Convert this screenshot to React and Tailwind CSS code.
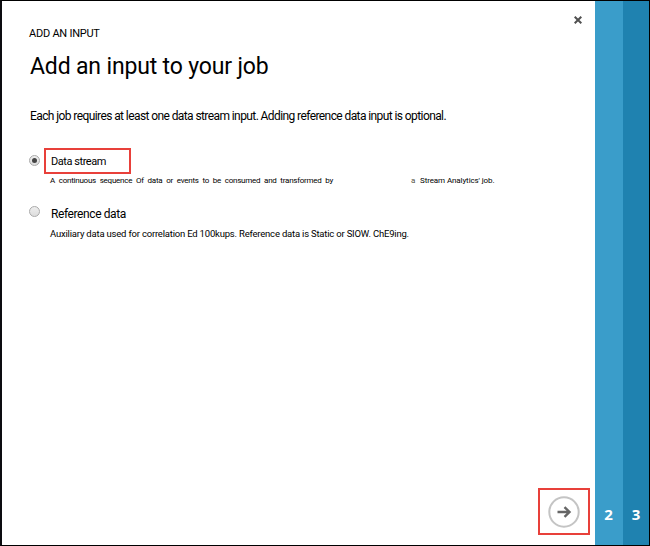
function Radio({ checked }) {
  return (
    <span className="mb-px flex h-[11px] w-[11px] shrink-0 items-center justify-center rounded-full border border-[#aaa] bg-linear-to-b from-[#eee] to-[#ddd]">
      {checked && <span className="h-[5px] w-[5px] rounded-full bg-[#444]" />}
    </span>
  );
}

export default function App() {
  return (
    <div className="flex h-[546px] w-[650px] overflow-hidden border border-l-2 border-black border-l-[#0c0c10] bg-white font-['Roboto','Liberation_Sans',sans-serif] text-black whitespace-nowrap">
      <main className="flex w-[593px] shrink-0 flex-col">
        <header className="flex h-[92px] justify-between pr-[13px] pl-[27px]">
          <div>
            <p className="mt-[25px] h-4 text-[11px] leading-4 tracking-[-0.24px]">ADD AN INPUT</p>
            <h1 className="mt-[9px] h-8 pl-px text-[23px] leading-8 tracking-[-0.16px]">Add an input to your job</h1>
          </div>
          <svg className="mt-[15px] h-2 w-2" viewBox="0 0 8 8" stroke="#505050" strokeWidth="2">
            <path d="M.7.7 7.3 7.3M7.3.7.7 7.3" />
          </svg>
        </header>
        <p className="mt-[15px] h-4 pl-[28px] text-[12px] leading-4 tracking-[-0.59px]">
          Each job requires at least one data stream input. Adding reference data input is optional.
        </p>
        <label className="mt-[24px] flex h-[26px] items-center pl-[27px]">
          <Radio checked />
          <span className="ml-[4px] flex h-[26px] w-[87px] items-center border-[2.5px] border-[#e8403a] pt-[2px] pl-[5px] text-[11px] tracking-[-0.45px]">
            Data stream
          </span>
        </label>
        <p className="mt-px flex h-3 pl-[48px] text-[8px] leading-3">
          <span className="w-[361px] tracking-[-0.24px] [word-spacing:2px]">
            A continuous sequence Of data or events to be consumed and transformed by
          </span>
          <span className="w-[9px] text-[#554]">a</span>
          <span className="tracking-[-0.1px]">Stream Analytics' job.</span>
        </p>
        <label className="mt-[17px] flex h-4 items-center pl-[27px]">
          <Radio />
          <span className="ml-[11px] pt-[3px] text-[12px] leading-4 tracking-[-0.4px]">Reference data</span>
        </label>
        <p className="mt-[8px] h-3 pl-[48px] text-[9.5px] leading-3 tracking-[-0.2px]">
          Auxiliary data used for correlation Ed 100kups. Reference data is Static or SIOW. ChE9ing.
        </p>
        <footer className="mt-auto flex justify-end pr-[5px] pb-[10px]">
          <button className="flex h-[47px] w-[52px] items-center justify-center border-[2px] border-[#e8403a] pt-px">
            <svg className="h-8 w-8" viewBox="0 0 32 32" fill="none">
              <circle cx="16" cy="16" r="14.7" stroke="#c4c4c4" strokeWidth="2" />
              <path d="M9.5 16H21M16.5 11.2l5 4.8-5 4.8" stroke="#666" strokeWidth="2.4" />
            </svg>
          </button>
        </footer>
      </main>
      <aside className="flex flex-1 font-['Open_Sans',sans-serif] text-[15px] font-bold text-white">
        <div className="flex w-[28px] items-end justify-center bg-[#3a9dca] pr-px pb-[21px] leading-5">2</div>
        <div className="flex flex-1 items-end justify-center bg-[#1f82b0] pb-[21px] leading-5">3</div>
      </aside>
    </div>
  );
}
